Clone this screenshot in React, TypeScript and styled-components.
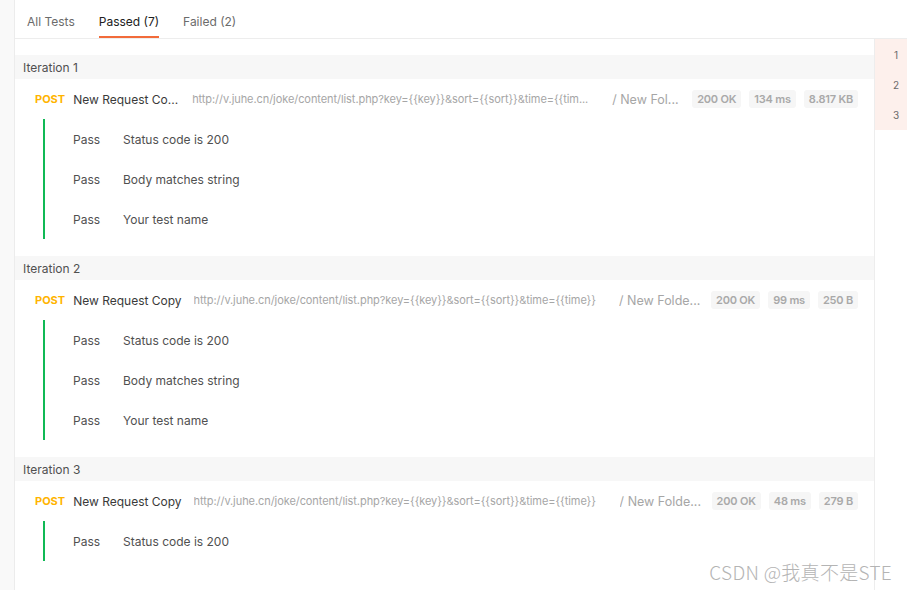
import React from "react";
import styled, { createGlobalStyle } from "styled-components";

const GlobalStyle = createGlobalStyle`
  html, body { margin: 0; padding: 0; height: 100%; }
  body {
    font-family: Inter, "Noto Sans", "Liberation Sans", sans-serif;
    background: #ffffff;
    overflow: hidden;
  }
  #root { height: 100%; }
  * { box-sizing: border-box; }
`;

const Shell = styled.div`
  position: relative;
  display: flex;
  height: 100vh;
  width: 100%;
`;

const LeftRail = styled.div`
  width: 15px;
  flex: 0 0 15px;
  background: #f9f9f9;
  border-right: 1px solid #ececec;
`;

const Main = styled.div`
  flex: 1;
  display: flex;
  flex-direction: column;
  min-width: 0;
`;

const TabBar = styled.div`
  height: 39px;
  flex: 0 0 39px;
  display: flex;
  gap: 24px;
  padding-left: 12px;
  border-bottom: 1px solid #ededed;
`;

const Tab = styled.div<{ $active?: boolean }>`
  display: flex;
  align-items: center;
  height: 38px;
  padding-top: 6px;
  font-size: 12px;
  color: ${(p) => (p.$active ? "#212121" : "#6b6b6b")};
  border-bottom: 2px solid ${(p) => (p.$active ? "#f26b3a" : "transparent")};
`;

const Body = styled.div`
  flex: 1;
  display: flex;
  min-height: 0;
`;

const Results = styled.div`
  flex: 1;
  min-width: 0;
  overflow: hidden;
`;

const Iteration = styled.section`
  padding-top: 17px;
  &:first-child { padding-top: 16px; }
`;

const IterationHeader = styled.div`
  height: 24px;
  display: flex;
  align-items: center;
  padding-left: 8px;
  background: #f7f7f7;
  font-size: 12px;
  color: #505050;
`;

const RequestRow = styled.div`
  height: 40px;
  display: flex;
  align-items: center;
  padding: 0 16px 0 20px;
  white-space: nowrap;
`;

const Method = styled.span`
  flex: 0 0 auto;
  font-size: 11px;
  font-weight: 700;
  color: #ffb400;
  margin-right: 8px;
`;

const Clip = styled.span`
  overflow: hidden;
  white-space: nowrap;
`;

const ReqName = styled(Clip)`
  flex: 0 0 auto;
  font-size: 12px;
  color: #3a3a3a;
`;

const Url = styled(Clip)<{ $gap: number }>`
  flex: 1 1 auto;
  min-width: 0;
  margin-left: ${(p) => p.$gap}px;
  font-size: 11px;
  letter-spacing: -0.07px;
  color: #a6a6a6;
`;

const Folder = styled(Clip)<{ $w: number }>`
  flex: 0 0 ${(p) => p.$w}px;
  margin-left: 12px;
  font-size: 12.5px;
  color: #a6a6a6;
`;

const Badges = styled.div`
  flex: 0 0 auto;
  display: flex;
  gap: 8px;
`;

const Badge = styled.span`
  height: 18px;
  display: flex;
  align-items: center;
  padding: 0 5px;
  border-radius: 3px;
  background: #f6f6f6;
  font-size: 11px;
  font-weight: 600;
  letter-spacing: -0.2px;
  color: #a9a9a9;
`;

const TestList = styled.div`
  margin-left: 28px;
  border-left: 2px solid #10b955;
  padding-left: 28px;
`;

const TestRow = styled.div`
  height: 40px;
  display: flex;
  align-items: center;
  font-size: 12px;
  color: #505050;
`;

const TestStatus = styled.span`
  width: 50px;
`;

const IterNav = styled.div`
  width: 33px;
  flex: 0 0 33px;
  border-left: 1px solid #ededed;
`;

const IterNavItem = styled.div`
  height: 30px;
  display: flex;
  align-items: center;
  justify-content: center;
  padding-left: 10px;
  background: #fdf0ec;
  font-size: 10px;
  color: #6b6b6b;
  &:first-child { height: 31px; padding-top: 1px; }
`;

const Watermark = styled.div`
  position: absolute;
  right: 15px;
  bottom: 5px;
  font-family: "Noto Sans CJK SC", "Liberation Sans", sans-serif;
  font-size: 19px;
  font-weight: 300;
  letter-spacing: 0.3px;
  color: #a8a8a8;
  opacity: 0.85;
  pointer-events: none;
`;

type Req = {
  name: string;
  urlGap: number;
  url: string;
  folder: string;
  folderWidth: number;
  status: string;
  time: string;
  size: string;
  tests: string[];
};

const FULL_URL =
  "http://v.juhe.cn/joke/content/list.php?key={{key}}&sort={{sort}}&time={{time}}";

const iterations: Req[] = [
  {
    name: "New Request Co...",
    urlGap: 14,
    url: "http://v.juhe.cn/joke/content/list.php?key={{key}}&sort={{sort}}&time={{tim...",
    folder: "/ New Fol...",
    folderWidth: 80,
    status: "200 OK",
    time: "134 ms",
    size: "8.817 KB",
    tests: ["Status code is 200", "Body matches string", "Your test name"],
  },
  {
    name: "New Request Copy",
    urlGap: 12,
    url: FULL_URL,
    folder: "/ New Folde...",
    folderWidth: 92,
    status: "200 OK",
    time: "99 ms",
    size: "250 B",
    tests: ["Status code is 200", "Body matches string", "Your test name"],
  },
  {
    name: "New Request Copy",
    urlGap: 12,
    url: FULL_URL,
    folder: "/ New Folde...",
    folderWidth: 92,
    status: "200 OK",
    time: "48 ms",
    size: "279 B",
    tests: ["Status code is 200"],
  },
];

export default function App() {
  return (
    <>
      <GlobalStyle />
      <Shell>
        <LeftRail />
        <Main>
          <TabBar>
            <Tab>All Tests</Tab>
            <Tab $active>Passed (7)</Tab>
            <Tab>Failed (2)</Tab>
          </TabBar>
          <Body>
            <Results>
              {iterations.map((it, i) => (
                <Iteration key={i}>
                  <IterationHeader>Iteration {i + 1}</IterationHeader>
                  <RequestRow>
                    <Method>POST</Method>
                    <ReqName>{it.name}</ReqName>
                    <Url $gap={it.urlGap}>{it.url}</Url>
                    <Folder $w={it.folderWidth}>{it.folder}</Folder>
                    <Badges>
                      <Badge>{it.status}</Badge>
                      <Badge>{it.time}</Badge>
                      <Badge>{it.size}</Badge>
                    </Badges>
                  </RequestRow>
                  <TestList>
                    {it.tests.map((t) => (
                      <TestRow key={t}>
                        <TestStatus>Pass</TestStatus>
                        {t}
                      </TestRow>
                    ))}
                  </TestList>
                </Iteration>
              ))}
            </Results>
            <IterNav>
              <IterNavItem>1</IterNavItem>
              <IterNavItem>2</IterNavItem>
              <IterNavItem>3</IterNavItem>
            </IterNav>
          </Body>
        </Main>
        <Watermark>CSDN @我真不是STE</Watermark>
      </Shell>
    </>
  );
}
